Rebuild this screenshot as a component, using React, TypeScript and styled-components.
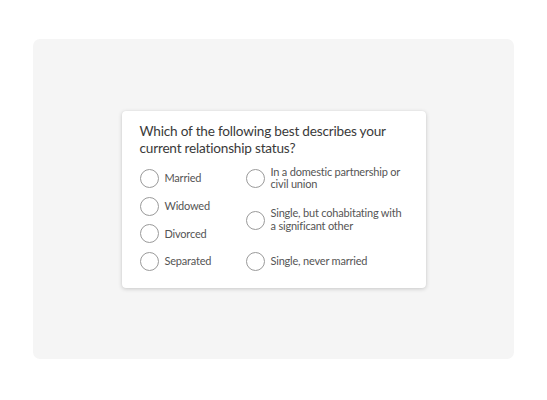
import React from "react";
import styled, { createGlobalStyle } from "styled-components";

const Global = createGlobalStyle`
  html, body { margin: 0; padding: 0; background: #ffffff; }
  body { font-family: Lato, "Noto Sans", sans-serif; }
`;

const Page = styled.div`
  width: 547px;
  height: 400px;
  box-sizing: border-box;
  padding: 39px 33px 41px 33px;
`;

const Panel = styled.div`
  width: 481px;
  height: 320px;
  background: #f5f5f5;
  border-radius: 7px;
  display: flex;
  align-items: center;
  justify-content: center;
`;

const Card = styled.div`
  width: 304px;
  box-sizing: border-box;
  background: #ffffff;
  border-radius: 4px;
  box-shadow: 0 1px 4px rgba(0, 0, 0, 0.18), 0 0 1px rgba(0, 0, 0, 0.08);
  padding: 12px 18px 13px 18px;
  margin-top: 1px;
`;

const Title = styled.div`
  font-size: 13.6px;
  line-height: 17px;
  letter-spacing: -0.2px;
  color: #3a3a3a;
  white-space: nowrap;
  margin-bottom: 8px;
`;

const Options = styled.div`
  display: grid;
  grid-template-columns: 106px 1fr;
  grid-template-rows: repeat(4, 27.7px);
  grid-auto-flow: column;
`;

const Option = styled.label<{ $span?: number }>`
  display: flex;
  align-items: center;
  gap: 6px;
  grid-row: span ${(p) => p.$span ?? 1};
  font-size: 11px;
  line-height: 12.6px;
  letter-spacing: -0.2px;
  color: #555555;
  white-space: nowrap;
`;

const Circle = styled.span`
  flex: none;
  width: 17px;
  height: 17px;
  border: 1px solid #9a9a9a;
  border-radius: 50%;
  background: #fff;
`;

const left = ["Married", "Widowed", "Divorced", "Separated"];
const right: { text: React.ReactNode; span: number }[] = [
  { text: <>In a domestic partnership or<br />civil union</>, span: 1 },
  { text: <>Single, but cohabitating with<br />a significant other</>, span: 2 },
  { text: "Single, never married", span: 1 },
];

export default function App() {
  return (
    <>
      <Global />
      <Page>
        <Panel>
          <Card>
            <Title>
              Which of the following best describes your
              <br />
              current relationship status?
            </Title>
            <Options>
              {left.map((t) => (
                <Option key={t}>
                  <Circle />
                  <span>{t}</span>
                </Option>
              ))}
              {right.map((r, i) => (
                <Option key={i} $span={r.span}>
                  <Circle />
                  <span>{r.text}</span>
                </Option>
              ))}
            </Options>
          </Card>
        </Panel>
      </Page>
    </>
  );
}
